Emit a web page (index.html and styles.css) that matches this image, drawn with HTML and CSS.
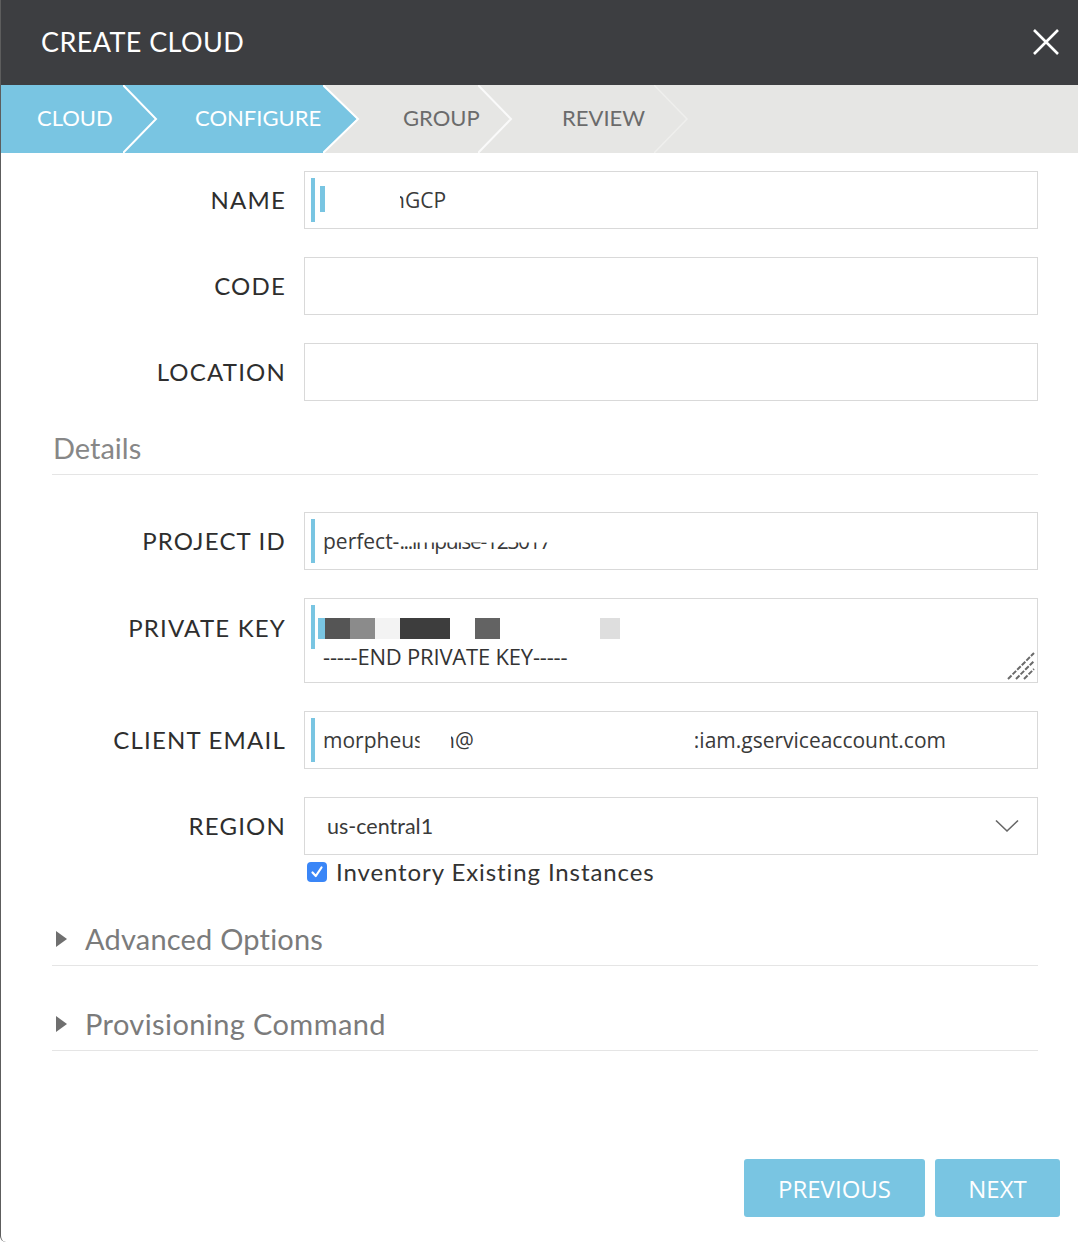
FILE: index.html
```html
<!DOCTYPE html>
<html lang="en">
<head>
<meta charset="utf-8">
<title>Create Cloud</title>
<link rel="stylesheet" href="styles.css">
</head>
<body>
<div class="modal">
  <header class="modal-header">
    <h1 class="modal-title">CREATE CLOUD</h1>
    <button class="close" aria-label="Close">
      <svg width="28" height="28" viewBox="0 0 28 28"><path d="M2 2 L26 26 M26 2 L2 26" stroke="#fff" stroke-width="2.6" fill="none"/></svg>
    </button>
  </header>

  <nav class="steps">
    <div class="step done s1">CLOUD
      <svg class="sep" width="36" height="68" viewBox="0 0 36 68"><polyline points="0,0 33,34 0,68" fill="none" stroke="#fff" stroke-width="2"/></svg>
    </div>
    <div class="step done current s2">CONFIGURE
      <svg class="sep arrow" width="38" height="68" viewBox="0 0 38 68"><polygon points="0,0 34,34 0,68" fill="#79c5e2"/><polyline points="0,0 35,34 0,68" fill="none" stroke="#fff" stroke-width="2"/></svg>
    </div>
    <div class="step s3">GROUP
      <svg class="sep" width="36" height="68" viewBox="0 0 36 68"><polyline points="0,0 33,34 0,68" fill="none" stroke="#fafafa" stroke-width="2"/></svg>
    </div>
    <div class="step s4">REVIEW
      <svg class="sep" width="36" height="68" viewBox="0 0 36 68"><polyline points="0,0 33,34 0,68" fill="none" stroke="#efefed" stroke-width="1.5"/></svg>
    </div>
  </nav>

  <main class="form">
    <div class="fields">
      <div class="row">
        <label class="label">NAME</label>
        <div class="input">
          <span class="bar"></span><span class="bar small"></span>
          <span class="value name-value"><span class="cut-left">n</span>GCP</span>
        </div>
      </div>
      <div class="row">
        <label class="label">CODE</label>
        <div class="input"></div>
      </div>
      <div class="row">
        <label class="label">LOCATION</label>
        <div class="input"></div>
      </div>
    </div>

    <h2 class="section-title">Details</h2>

    <div class="fields details">
      <div class="row">
        <label class="label">PROJECT ID</label>
        <div class="input">
          <span class="bar"></span>
          <span class="value">perfect-<span class="cut-top">...impulse-123017</span></span>
        </div>
      </div>
      <div class="row top">
        <label class="label">PRIVATE KEY</label>
        <div class="textarea">
          <span class="bar tall"></span>
          <div class="key-line">
            <span class="blk c0" style="width:7px"></span><span class="blk c1" style="width:25px"></span><span class="blk c2" style="width:25px"></span><span class="blk c3" style="width:25px"></span><span class="blk c4" style="width:50px"></span><span class="blk" style="width:25px"></span><span class="blk c5" style="width:25px"></span><span class="blk" style="width:100px"></span><span class="blk c6" style="width:20px"></span>
          </div>
          <div class="key-text">-----END PRIVATE KEY-----</div>
          <svg class="grip" width="28" height="28" viewBox="0 0 28 28"><path d="M1 27 L27 1 M9 27 L27 9 M17 27 L27 17" stroke="#6a6a6a" stroke-width="2" stroke-dasharray="5 1.5" fill="none"/></svg>
        </div>
      </div>
      <div class="row">
        <label class="label">CLIENT EMAIL</label>
        <div class="input">
          <span class="bar"></span>
          <span class="value email">morpheu<span class="cut-right">s</span><span class="gap g1"></span><span class="cut-left narrow">n</span>@<span class="gap g2"></span><span class="cut-left colon">:</span>iam.gserviceaccount.com</span>
        </div>
      </div>
      <div class="row">
        <label class="label">REGION</label>
        <div class="input select">
          <span class="value region">us-central1</span>
          <svg class="caret" width="24" height="14" viewBox="0 0 24 14"><polyline points="1,1.5 12,12 23,1.5" fill="none" stroke="#666" stroke-width="1.6"/></svg>
        </div>
      </div>
      <div class="row check-row">
        <span></span>
        <label class="check">
          <span class="box"><svg width="20" height="20" viewBox="0 0 20 20"><polyline points="5.5,10.5 8.8,14 14.5,5.5" fill="none" stroke="#fff" stroke-width="2.2" stroke-linecap="round" stroke-linejoin="round"/></svg></span>
          Inventory Existing Instances
        </label>
      </div>
    </div>

    <div class="collapse first"><span class="tri"></span>Advanced Options</div>
    <div class="collapse"><span class="tri"></span>Provisioning Command</div>
  </main>

  <footer class="actions">
    <button class="btn prev">PREVIOUS</button>
    <button class="btn next">NEXT</button>
  </footer>
</div>
</body>
</html>
```

FILE: styles.css
```css
* { box-sizing: border-box; }
html, body { margin: 0; padding: 0; background: #fff; }
body { font-family: Lato, "Open Sans", sans-serif; color: #333; }

.modal {
  width: 1078px;
  height: 1242px;
  display: flex;
  flex-direction: column;
  background: #fff;
  border-left: 1px solid #5d5d5d;
  border-bottom-left-radius: 6px;
  overflow: hidden;
}

.modal-header {
  height: 85px;
  background: #3d3e41;
  display: flex;
  align-items: center;
  justify-content: space-between;
  padding: 0 18px 2px 40px;
}
.modal-title {
  margin: 0;
  font-size: 27px;
  font-weight: 400;
  color: #fff;
  letter-spacing: 0.4px;
}
.close {
  background: none;
  border: 0;
  padding: 0;
  width: 28px;
  height: 28px;
}
.close svg { display: block; }

.steps {
  height: 68px;
  background: #e6e6e4;
  display: flex;
}
.step {
  position: relative;
  height: 68px;
  display: flex;
  align-items: center;
  padding-bottom: 3px;
  font-size: 22px;
  color: #6b6b6b;
}
.step.done { background: #79c5e2; color: #fff; }
.s1 { width: 122px; padding-left: 36px; }
.s2 { width: 200px; padding-left: 72px; }
.s3 { width: 155px; padding-left: 80px; }
.s4 { width: 176px; padding-left: 84px; }
.sep {
  position: absolute;
  top: 0;
  left: 100%;
  z-index: 2;
}

.form {
  padding: 18px 40px 0 51px;
}
.fields {
  display: flex;
  flex-direction: column;
  gap: 28px;
}
.row {
  display: grid;
  grid-template-columns: 233px 1fr;
  column-gap: 19px;
  align-items: center;
}
.row.top { align-items: start; }
.label {
  text-align: right;
  font-size: 24px;
  line-height: 28px;
  letter-spacing: 1.2px;
  margin-right: -1px;
  color: #2e2e2e;
}
.row.top .label { padding-top: 16px; }

.input, .textarea {
  position: relative;
  height: 58px;
  border: 1px solid #d9d9d9;
  background: #fff;
  display: flex;
  align-items: center;
  padding-left: 18px;
}
.textarea {
  height: 85px;
  display: block;
  padding: 14px 0 0 13px;
}
.bar {
  position: absolute;
  left: 6px;
  top: 6px;
  bottom: 6px;
  width: 4px;
  background: #79c5e2;
}
.bar.small { left: 15px; top: 14px; bottom: 16px; width: 5px; }
.bar.tall { top: 6px; bottom: auto; height: 44px; }

.value {
  font-family: "Open Sans", Lato, sans-serif;
  font-size: 21px;
  color: #3a3a3a;
  white-space: nowrap;
}
.name-value { margin-left: 69px; }
.cut-left { display: inline-block; clip-path: inset(0 0 0 62%); }
.cut-left.narrow { clip-path: inset(0 0 0 70%); }
.cut-left.colon { clip-path: inset(0 0 0 20%); }
.cut-right { display: inline-block; clip-path: inset(0 45% 0 0); }
.cut-top { display: inline-block; clip-path: inset(55% 0 0 0); letter-spacing: -1.3px; }
.gap { display: inline-block; }
.g1 { width: 18px; }
.g2 { width: 220px; }

.key-line { display: flex; height: 21px; margin-top: 5px; }
.blk { display: block; height: 21px; }
.c0 { background: #79c5e2; }
.c1 { background: #555; }
.c2 { background: #8b8b8b; }
.c3 { background: #f3f3f3; }
.c4 { background: #3d3d3d; }
.c5 { background: #636363; }
.c6 { background: #dedede; }
.key-text {
  font-family: "Open Sans", Lato, sans-serif;
  font-size: 22px;
  line-height: 30px;
  color: #333;
  margin-top: 2px;
  padding-left: 5px;
  letter-spacing: -0.2px;
}
.grip { position: absolute; right: 2px; bottom: 2px; }

.select { justify-content: space-between; padding: 0 18px 0 22px; }
.region { font-family: Lato, sans-serif; font-size: 21.5px; }

.check-row { margin-top: -24px; }
.check {
  display: flex;
  align-items: center;
  gap: 9px;
  font-size: 24px;
  letter-spacing: 0.9px;
  color: #333;
  padding-left: 3px;
  line-height: 26px;
}
.box {
  width: 20px;
  height: 20px;
  border-radius: 4px;
  background: #3a86f7;
  display: block;
  flex: none;
}
.box svg { display: block; }

.section-title {
  margin: 30px 0 0;
  font-size: 29px;
  font-weight: 400;
  color: #878787;
  line-height: 34px;
  padding: 0 0 9px 1px;
  border-bottom: 1px solid #e5e5e5;
}
.details { margin-top: 37px; }

.collapse {
  display: flex;
  align-items: center;
  font-size: 29px;
  letter-spacing: 0.2px;
  line-height: 36px;
  color: #7b7b7b;
  padding-bottom: 8px;
  border-bottom: 1px solid #e5e5e5;
  margin-top: 40px;
}
.collapse.first { margin-top: 36px; }
.collapse + .collapse { letter-spacing: 0.4px; }
.tri {
  width: 0;
  height: 0;
  border-left: 11px solid #6f6f6f;
  border-top: 8px solid transparent;
  border-bottom: 8px solid transparent;
  margin: 0 18px 0 4px;
}

.actions {
  margin-top: auto;
  display: flex;
  justify-content: flex-end;
  gap: 10px;
  padding: 0 18px 25px 0;
}
.btn {
  height: 58px;
  border: 0;
  border-radius: 3px;
  background: #79c5e2;
  color: #fff;
  font-family: "Open Sans", Lato, sans-serif;
  font-size: 24px;
}
.prev { width: 181px; }
.next { width: 125px; }
```
